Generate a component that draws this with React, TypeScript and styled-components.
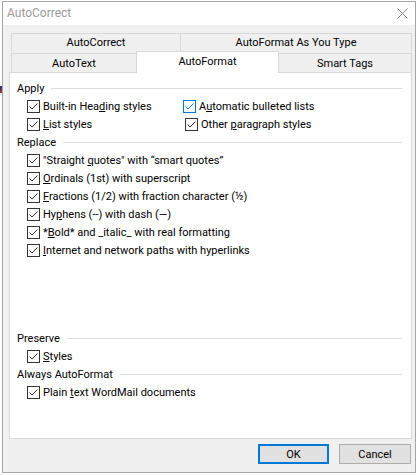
import React from "react";
import styled, { createGlobalStyle } from "styled-components";

const GlobalStyle = createGlobalStyle`
  html, body {
    margin: 0;
    padding: 0;
    background: #ffffff;
  }
  body {
    font-family: Roboto, "Liberation Sans", sans-serif;
    font-size: 11px;
    font-variant-ligatures: none;
    font-feature-settings: "liga" 0, "calt" 0;
    color: #000000;
  }
`;

const Stray = styled.span`
  position: absolute;
  left: 0;
  top: 86px;
  width: 2px;
  height: 7px;
  background: linear-gradient(to bottom, #2b2f6b, #a33a3a);
`;

const Window = styled.div`
  box-sizing: border-box;
  margin: 1px 0 0 2px;
  width: 414px;
  height: 472px;
  border: 1px solid #a6a6a6;
  display: flex;
  flex-direction: column;
`;

const TitleBar = styled.div`
  height: 25px;
  background: #ffffff;
  display: flex;
  align-items: center;
  justify-content: space-between;
  padding: 0 7px 0 4px;
`;

const TitleText = styled.span`
  color: #9a9a9a;
  font-size: 12px;
  padding-bottom: 1px;
`;

const Body = styled.div`
  flex: 1;
  background: #f0f0f0;
  padding: 8px 3px 8px 6px;
  display: flex;
  flex-direction: column;
`;

const TabRow = styled.div`
  display: flex;
  align-items: flex-end;
  margin-left: 2px;
`;

const Tab = styled.div<{ w: number; h: number; selected?: boolean }>`
  box-sizing: border-box;
  flex: 0 0 ${(p) => p.w}px;
  height: ${(p) => p.h}px;
  border: 1px solid #d9d9d9;
  border-bottom: none;
  margin-left: -1px;
  display: flex;
  align-items: center;
  justify-content: center;
  background: ${(p) => (p.selected ? "#ffffff" : "#f0f0f0")};
  position: ${(p) => (p.selected ? "relative" : "static")};
  z-index: ${(p) => (p.selected ? 1 : 0)};
  margin-bottom: ${(p) => (p.selected ? -1 : 0)}px;
  padding-bottom: ${(p) => (p.selected ? 3 : 0)}px;
  &:first-child {
    margin-left: 0;
  }
`;

const Panel = styled.div`
  box-sizing: border-box;
  height: 367px;
  background: #ffffff;
  border: 1px solid #d9d9d9;
  padding: 6px 9px 37px 7px;
  display: flex;
  flex-direction: column;
`;

const Section = styled.div<{ push?: boolean }>`
  display: flex;
  flex-direction: column;
  margin-top: ${(p) => (p.push ? "auto" : "0")};
`;

const Header = styled.div`
  height: 18px;
  display: flex;
  align-items: center;
  gap: 7px;
`;

const HeaderLine = styled.div`
  flex: 1;
  height: 1px;
  background: #dcdcdc;
`;

const ApplyGrid = styled.div`
  display: grid;
  grid-template-columns: 156px 1fr;
  padding-left: 10px;
`;

const List = styled.div`
  display: flex;
  flex-direction: column;
  padding-left: 10px;
`;

const Row = styled.label<{ shift?: number }>`
  height: 18px;
  display: flex;
  align-items: center;
  gap: 3px;
  padding-left: ${(p) => p.shift || 0}px;
  white-space: nowrap;
  u {
    text-underline-offset: 1px;
  }
`;

const Box = styled.span<{ focused?: boolean }>`
  box-sizing: border-box;
  width: 13px;
  height: 13px;
  flex: 0 0 13px;
  border: 1px solid ${(p) => (p.focused ? "#0078d7" : "#333333")};
  background: #ffffff;
  display: flex;
  svg {
    display: block;
  }
`;

const Footer = styled.div`
  display: flex;
  justify-content: flex-end;
  gap: 10px;
  margin-top: 5px;
  padding-right: 1px;
`;

const Button = styled.button<{ primary?: boolean }>`
  box-sizing: border-box;
  width: ${(p) => (p.primary ? 71 : 72)}px;
  height: 20px;
  font-family: inherit;
  font-size: 11px;
  color: #000000;
  background: #e1e1e1;
  border: ${(p) => (p.primary ? "2px solid #0078d7" : "1px solid #adadad")};
  padding: 0;
  margin: 0;
`;

const Check = ({ checked = true, focused = false }: { checked?: boolean; focused?: boolean }) => (
  <Box focused={focused}>
    {checked && (
      <svg width="11" height="11" viewBox="0 0 11 11">
        <path
          d="M1.5 5.5 L4 8 L9.5 2.5"
          fill="none"
          stroke={focused ? "#0078d7" : "#333333"}
          strokeWidth="1"
        />
      </svg>
    )}
  </Box>
);

const Item = ({
  children,
  focused,
  shift,
}: {
  children: React.ReactNode;
  focused?: boolean;
  shift?: number;
}) => (
  <Row shift={shift}>
    <Check focused={focused} />
    <span>{children}</span>
  </Row>
);

const GroupHeader = ({ title }: { title: string }) => (
  <Header>
    <span>{title}</span>
    <HeaderLine />
  </Header>
);

const CloseIcon = () => (
  <svg width="11" height="11" viewBox="0 0 11 11">
    <path d="M0.5 0.5 L10.5 10.5 M10.5 0.5 L0.5 10.5" stroke="#8a8a8a" strokeWidth="1" fill="none" />
  </svg>
);

const App = () => {
  return (
    <>
      <GlobalStyle />
      <Stray />
      <Window>
        <TitleBar>
          <TitleText>AutoCorrect</TitleText>
          <CloseIcon />
        </TitleBar>
        <Body>
          <TabRow>
            <Tab w={170} h={18}>AutoCorrect</Tab>
            <Tab w={232} h={18}>AutoFormat As You Type</Tab>
          </TabRow>
          <TabRow>
            <Tab w={126} h={19}>AutoText</Tab>
            <Tab w={143} h={22} selected>AutoFormat</Tab>
            <Tab w={134} h={19}>Smart Tags</Tab>
          </TabRow>
          <Panel>
            <Section>
              <GroupHeader title="Apply" />
              <ApplyGrid>
                <Item>
                  Built-in Hea<u>d</u>ing styles
                </Item>
                <Item focused>
                  A<u>u</u>tomatic bulleted lists
                </Item>
                <Item>
                  <u>L</u>ist styles
                </Item>
                <Item shift={2}>
                  Other <u>p</u>aragraph styles
                </Item>
              </ApplyGrid>
            </Section>
            <Section>
              <GroupHeader title="Replace" />
              <List>
                <Item>
                  "Straight <u>q</u>uotes" with “smart quotes”
                </Item>
                <Item>
                  <u>O</u>rdinals (1st) with superscript
                </Item>
                <Item>
                  <u>F</u>ractions (1/2) with fraction character (½)
                </Item>
                <Item>
                  Hy<u>p</u>hens (--) with dash (—)
                </Item>
                <Item>
                  *<u>B</u>old* and _italic_ with real formatting
                </Item>
                <Item>
                  <u>I</u>nternet and network paths with hyperlinks
                </Item>
              </List>
            </Section>
            <Section push>
              <GroupHeader title="Preserve" />
              <List>
                <Item>
                  <u>S</u>tyles
                </Item>
              </List>
              <GroupHeader title="Always AutoFormat" />
              <List>
                <Item>
                  Plain <u>t</u>ext WordMail documents
                </Item>
              </List>
            </Section>
          </Panel>
          <Footer>
            <Button primary>OK</Button>
            <Button>Cancel</Button>
          </Footer>
        </Body>
      </Window>
    </>
  );
};

export default App;
